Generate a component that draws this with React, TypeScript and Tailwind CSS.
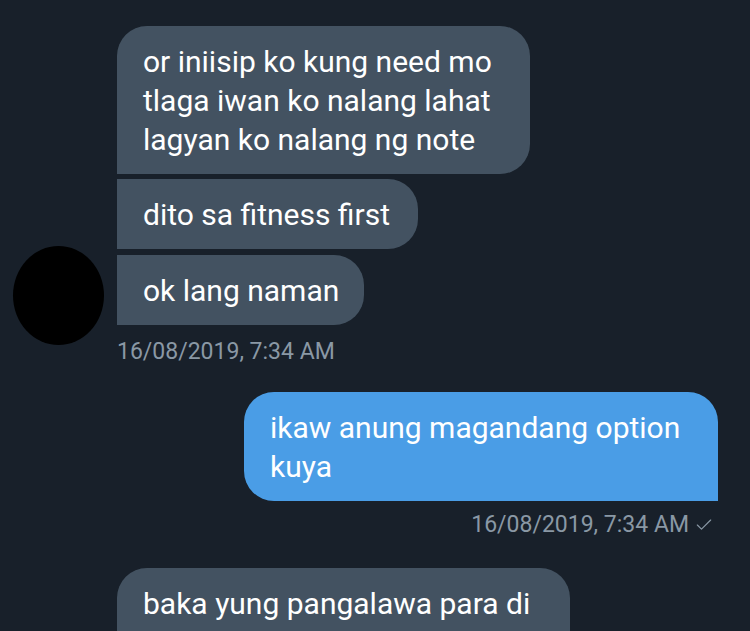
import { Check } from "lucide-react";

const font = { fontFamily: "Roboto, 'Liberation Sans', sans-serif" };

function Bubble({ children, className }: { children: any; className: string }) {
    return (
        <div className={"px-[26px] py-[15.5px] text-[30px] leading-[39px] text-white " + className}>
            {children}
        </div>
    );
}

export default function App() {
    return (
        <div style={font} className="w-[750px] h-[631px] overflow-hidden bg-[#18202a] pt-[26px]">
            <div className="flex items-end">
                <div className="w-[91px] h-[99px] rounded-[50%] bg-black ml-[13px] mr-[13px] mb-[20px] shrink-0"></div>
                <div className="flex flex-col items-start">
                    <Bubble className="w-[413px] bg-[#435261] rounded-[30px] rounded-bl-none whitespace-nowrap">
                        or iniisip ko kung need mo<br />tlaga iwan ko nalang lahat<br />lagyan ko nalang ng note
                    </Bubble>
                    <Bubble className="mt-[5px] w-[301px] bg-[#435261] rounded-r-[30px] whitespace-nowrap">
                        dito sa fitness first
                    </Bubble>
                    <Bubble className="mt-[6px] w-[247px] bg-[#435261] rounded-r-[30px] whitespace-nowrap">
                        ok lang naman
                    </Bubble>
                    <div className="mt-[14px] text-[23px] leading-[26px] text-[#8a98a5]">16/08/2019, 7:34 AM</div>
                </div>
            </div>

            <div className="flex flex-col items-end pr-[32px] mt-[27px]">
                <Bubble className="w-[474px] bg-[#4a9de6] rounded-[30px] rounded-br-none whitespace-nowrap">
                    ikaw anung magandang option<br />kuya
                </Bubble>
                <div className="mt-[11px] mr-[4px] flex items-center gap-[5px] text-[23px] leading-[26px] text-[#8a98a5]">
                    16/08/2019, 7:34 AM
                    <Check size={20} strokeWidth={1.4} />
                </div>
            </div>

            <div className="pl-[117px] mt-[30px]">
                <Bubble className="w-[453px] h-[150px] bg-[#435261] rounded-[30px] whitespace-nowrap">
                    baka yung pangalawa para di
                </Bubble>
            </div>
        </div>
    );
}
